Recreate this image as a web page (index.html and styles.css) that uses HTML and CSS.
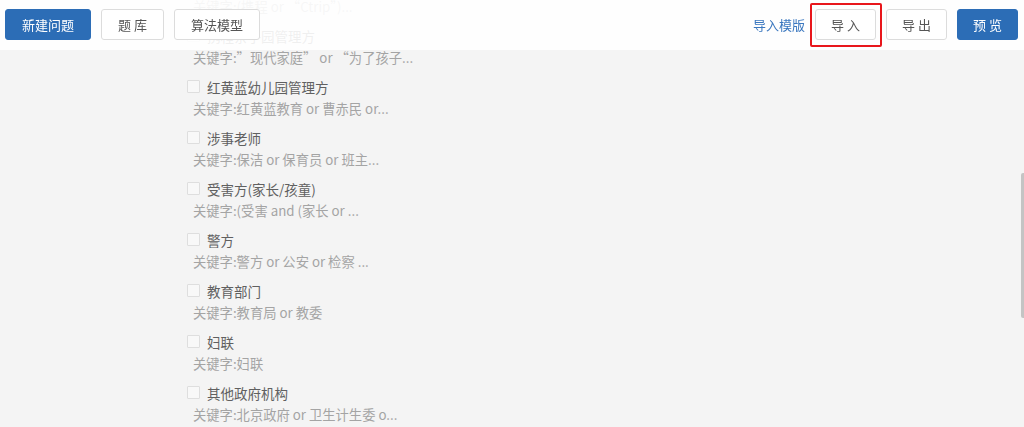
FILE: index.html
```html
<!DOCTYPE html>
<html lang="zh-CN">
<head>
    <meta charset="UTF-8">
    <title>问题配置</title>
    <link rel="stylesheet" href="styles.css">
</head>
<body>

<div class="toolbar">
    <div class="toolbar-left">
        <button class="btn btn-primary">新建问题</button>
        <button class="btn">题 库</button>
        <button class="btn">算法模型</button>
    </div>
    <div class="toolbar-right">
        <a class="link" href="#">导入模版</a>
        <span class="highlight">
            <button class="btn btn-small">导 入</button>
        </span>
        <button class="btn btn-small">导 出</button>
        <button class="btn btn-primary btn-small">预 览</button>
    </div>
</div>

<ul class="question-list">
    <li>
        <div class="q-title"><span class="check"></span>携程</div>
        <div class="q-keys">关键字:(携程 or “Ctrip”)...</div>
    </li>
    <li>
        <div class="q-title"><span class="check"></span>携程亲子园管理方</div>
        <div class="q-keys">关键字:”现代家庭” or “为了孩子...</div>
    </li>
    <li>
        <div class="q-title"><span class="check"></span>红黄蓝幼儿园管理方</div>
        <div class="q-keys">关键字:红黄蓝教育 or 曹赤民 or...</div>
    </li>
    <li>
        <div class="q-title"><span class="check"></span>涉事老师</div>
        <div class="q-keys">关键字:保洁 or 保育员 or 班主...</div>
    </li>
    <li>
        <div class="q-title"><span class="check"></span>受害方(家长/孩童)</div>
        <div class="q-keys">关键字:(受害 and (家长 or ...</div>
    </li>
    <li>
        <div class="q-title"><span class="check"></span>警方</div>
        <div class="q-keys">关键字:警方 or 公安 or 检察 ...</div>
    </li>
    <li>
        <div class="q-title"><span class="check"></span>教育部门</div>
        <div class="q-keys">关键字:教育局 or 教委</div>
    </li>
    <li>
        <div class="q-title"><span class="check"></span>妇联</div>
        <div class="q-keys">关键字:妇联</div>
    </li>
    <li>
        <div class="q-title"><span class="check"></span>其他政府机构</div>
        <div class="q-keys">关键字:北京政府 or 卫生计生委 o...</div>
    </li>
</ul>

<div class="scroll-thumb"></div>

</body>
</html>
```

FILE: styles.css
```css
body {
    margin: 0;
    padding: 0;
    background-color: #f4f4f4;
    font-family: "Noto Sans CJK SC", "Noto Sans", sans-serif;
    font-size: 13px;
    overflow: hidden;
}

.toolbar {
    position: fixed;
    top: 0;
    left: 0;
    right: 0;
    height: 50px;
    display: flex;
    align-items: center;
    justify-content: space-between;
    padding: 0 6px 1px 5px;
    box-sizing: border-box;
    background-color: rgba(255, 255, 255, 0.9);
    z-index: 10;
}

.toolbar-left,
.toolbar-right {
    display: flex;
    align-items: center;
    gap: 10px;
}

.btn {
    height: 31px;
    padding: 0 16px;
    border: 1px solid #dcdcdc;
    border-radius: 3px;
    background-color: #fff;
    color: #555;
    font-family: inherit;
    font-size: 13px;
    line-height: 29px;
    cursor: pointer;
}

.btn-small {
    width: 61px;
    padding: 0;
}

.btn-primary {
    background-color: #2c6db6;
    border-color: #2c6db6;
    color: #fff;
}

.link {
    color: #3a77bf;
    text-decoration: none;
    font-size: 13px;
}

.highlight {
    position: relative;
    display: flex;
}

.highlight::after {
    content: "";
    position: absolute;
    top: -6px;
    bottom: -7px;
    left: -5px;
    right: -6px;
    border: 2px solid #e8161b;
    border-radius: 2px;
    pointer-events: none;
}

.question-list {
    list-style: none;
    margin: -26px 0 0;
    padding: 0 0 0 187px;
}

.question-list li {
    padding-bottom: 7px;
}

.q-title {
    display: flex;
    align-items: center;
    height: 22px;
    color: #606060;
    font-size: 13.5px;
}

.check {
    width: 11px;
    height: 11px;
    margin-right: 7px;
    margin-top: -2px;
    border: 1px solid #dedede;
    border-radius: 1px;
    background-color: #f8f8f8;
}

.q-keys {
    height: 22px;
    line-height: 22px;
    padding-left: 6px;
    color: #a4a4a4;
    font-size: 13.3px;
    white-space: nowrap;
}

.scroll-thumb {
    position: fixed;
    top: 173px;
    right: 0;
    width: 3px;
    height: 145px;
    background-color: #c4c4c4;
    border-radius: 2px 0 0 2px;
}
```
